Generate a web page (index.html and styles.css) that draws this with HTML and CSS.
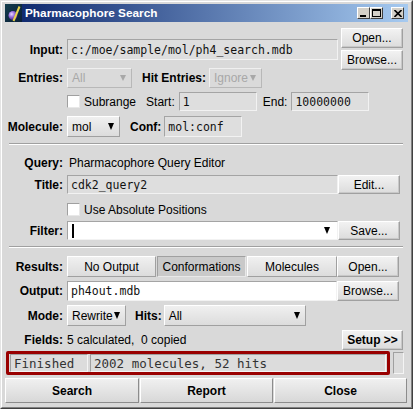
FILE: index.html
```html
<!DOCTYPE html>
<html>
<head>
<meta charset="utf-8">
<link rel="stylesheet" href="styles.css">
</head>
<body>
<div class="window">
  <div class="frame">
    <div class="titlebar">
      <svg class="app-icon" viewBox="0 0 17 18" width="17" height="18">
        <defs>
          <linearGradient id="ibg" x1="0" y1="0" x2="1" y2="1">
            <stop offset="0" stop-color="#123c4c"/>
            <stop offset="1" stop-color="#0b1f38"/>
          </linearGradient>
          <radialGradient id="sph" cx="0.35" cy="0.35" r="0.7">
            <stop offset="0" stop-color="#e8d8ff"/>
            <stop offset="0.45" stop-color="#9a70e0"/>
            <stop offset="1" stop-color="#3c1c78"/>
          </radialGradient>
        </defs>
        <rect width="17" height="18" fill="url(#ibg)"/>
        <circle cx="8" cy="11.5" r="4.5" fill="url(#sph)"/>
        <path d="M14.5 2.5 L8.5 17" stroke="#e8d44a" stroke-width="2" fill="none"/>
      </svg>
      <span class="title">Pharmacophore Search</span>
      <div class="controls">
        <span class="ctl"><svg width="9" height="8" viewBox="0 0 9 8"><rect x="1" y="6" width="6" height="2" fill="#000"/></svg></span>
        <span class="ctl"><svg width="9" height="8" viewBox="0 0 9 8"><rect x="0.5" y="0.5" width="8" height="7" fill="none" stroke="#000"/><rect x="0" y="0" width="9" height="2" fill="#000"/></svg></span>
        <span class="ctl ctl-close"><svg width="8" height="7" viewBox="0 0 8 7"><path d="M0.5 0 L7.5 7 M7.5 0 L0.5 7" stroke="#000" stroke-width="1.6"/></svg></span>
      </div>
    </div>

    <div class="body">
      <section class="sec-top">
        <div class="top-left">
          <div class="row r-input">
            <span class="lbl">Input:</span>
            <div class="fld mono w-main">c:/moe/sample/mol/ph4_search.mdb</div>
          </div>
          <div class="row r-entries">
            <span class="lbl">Entries:</span>
            <div class="dd dis w-entries"><span>All</span><span class="tri tri-sm"></span></div>
            <span class="lbl2 ml10">Hit Entries:</span>
            <div class="dd dis w-hit ml3"><span>Ignore</span><span class="tri tri-sm"></span></div>
          </div>
          <div class="row r-sub">
            <span class="lbl"></span>
            <span class="chk"></span>
            <span class="txt ml4">Subrange</span>
            <span class="txt ml10">Start:</span>
            <div class="fld mono w-num ml4">1</div>
            <span class="txt ml6">End:</span>
            <div class="fld mono w-num ml4">10000000</div>
          </div>
          <div class="row r-mol">
            <span class="lbl">Molecule:</span>
            <div class="dd w-mol"><span>mol</span><span class="tri"></span></div>
            <span class="lbl2 ml10">Conf:</span>
            <div class="fld mono w-conf ml3">mol:conf</div>
          </div>
        </div>
        <div class="top-right">
          <button class="btn">Open...</button>
          <button class="btn">Browse...</button>
        </div>
      </section>

      <div class="sep sep1"></div>

      <div class="row r-query">
        <span class="lbl">Query:</span>
        <span class="txt ml2">Pharmacophore Query Editor</span>
      </div>
      <div class="row r-title">
        <span class="lbl">Title:</span>
        <div class="fld mono w-main">cdk2_query2</div>
        <button class="btn ml3">Edit...</button>
      </div>
      <div class="row r-abs">
        <span class="lbl"></span>
        <span class="chk"></span>
        <span class="txt ml4">Use Absolute Positions</span>
      </div>
      <div class="row r-filter">
        <span class="lbl">Filter:</span>
        <div class="fld white w-main filter"><span class="caret"></span><span class="tri"></span></div>
        <button class="btn ml3">Save...</button>
      </div>

      <div class="sep sep2"></div>

      <div class="row r-results">
        <span class="lbl">Results:</span>
        <div class="seg">
          <button class="sbtn s1">No Output</button>
          <button class="sbtn s2 on">Conformations</button>
          <button class="sbtn s3">Molecules</button>
        </div>
        <button class="btn ml4">Open...</button>
      </div>
      <div class="row r-output">
        <span class="lbl">Output:</span>
        <div class="fld white mono w-out">ph4out.mdb</div>
        <button class="btn ml4">Browse...</button>
      </div>
      <div class="row r-mode">
        <span class="lbl">Mode:</span>
        <div class="dd w-mode"><span>Rewrite</span><span class="tri"></span></div>
        <span class="lbl2 ml9">Hits:</span>
        <div class="dd w-hits ml2"><span>All</span><span class="tri"></span></div>
      </div>
      <div class="row r-fields">
        <span class="lbl">Fields:</span>
        <span class="txt fields-txt">5 calculated,&nbsp; 0 copied</span>
        <button class="btn bold setup">Setup &gt;&gt;</button>
      </div>

      <div class="status">
        <div class="redbox">
          <div class="cell c-state">Finished</div>
          <div class="cell c-msg">2002 molecules, 52 hits</div>
        </div>
        <div class="cell c-small"></div>
      </div>

      <div class="actions">
        <button class="abtn a1">Search</button>
        <button class="abtn a2">Report</button>
        <button class="abtn a3">Close</button>
      </div>
    </div>
  </div>
</div>
</body>
</html>
```
FILE: styles.css
```css
html, body {
  margin: 0;
  padding: 0;
}
body {
  width: 413px;
  height: 409px;
  overflow: hidden;
  background: #d9d9d9;
  font-family: "Liberation Sans", Arial, sans-serif;
  font-size: 12px;
  color: #000;
}
.window {
  box-sizing: border-box;
  width: 413px;
  height: 409px;
  border: 1px solid;
  border-color: #e4e4e4 #404040 #404040 #e4e4e4;
}
.frame {
  box-sizing: border-box;
  height: 100%;
  border: 1px solid;
  border-color: #ffffff #808080 #808080 #ffffff;
  padding: 2px 3px 2px 3px;
  background: #d9d9d9;
}
.titlebar {
  height: 18px;
  display: flex;
  align-items: center;
  background: linear-gradient(to right, #0a246a, #a6caf0);
}
.app-icon {
  flex: none;
  display: block;
}
.title {
  color: #fff;
  font-weight: bold;
  font-size: 11.8px;
  margin-left: 3px;
  white-space: nowrap;
}
.controls {
  margin-left: auto;
  display: flex;
  align-items: center;
  padding-right: 4px;
}
.ctl {
  box-sizing: border-box;
  width: 13px;
  height: 12px;
  background: #d4d0c8;
  border: 1px solid;
  border-color: #ffffff #404040 #404040 #ffffff;
  display: flex;
  align-items: center;
  justify-content: center;
}
.ctl svg { display: block; }
.ctl-close { margin-left: 8px; }

.body {
  display: flex;
  flex-direction: column;
}

/* rows */
.row {
  display: flex;
  align-items: center;
  flex: none;
}
.row > * { flex: none; }
.lbl {
  width: 58px;
  margin-right: 4px;
  text-align: right;
  font-weight: bold;
  white-space: nowrap;
}
.lbl2 {
  font-weight: bold;
  white-space: nowrap;
}
.txt { white-space: nowrap; }
.ml2 { margin-left: 2px; }
.ml3 { margin-left: 3px; }
.ml4 { margin-left: 4px; }
.ml6 { margin-left: 6px; }
.ml9 { margin-left: 9px; }
.ml10 { margin-left: 10px; }

.sec-top {
  display: flex;
  align-items: flex-start;
  padding-top: 6px;
}
.top-left { width: 333px; flex: none; }
.top-right {
  margin-left: 3px;
  display: flex;
  flex-direction: column;
  gap: 2px;
}
.r-input { margin-top: 11px; height: 21px; }
.r-entries { margin-top: 8px; height: 20px; }
.r-sub { margin-top: 4px; height: 19px; }
.r-mol { margin-top: 5px; height: 21px; }

.r-query { margin-top: 9px; height: 18px; }
.r-title { margin-top: 3px; height: 19px; }
.r-abs { margin-top: 6px; height: 19px; }
.r-filter { margin-top: 2px; height: 19px; }

.r-results { margin-top: 8px; height: 21px; }
.r-output { margin-top: 4px; height: 20px; }
.r-mode { margin-top: 4px; height: 21px; }
.r-fields { margin-top: 4px; height: 19px; }

.sep {
  margin-left: 4px;
  width: 394px;
  height: 0;
  border-top: 1px solid #a0a0a0;
  border-bottom: 1px solid #ffffff;
}
.sep1 { margin-top: 6px; }
.sep2 { margin-top: 6px; }

/* fields */
.fld {
  box-sizing: border-box;
  height: 100%;
  display: flex;
  align-items: center;
  border: 1px solid;
  border-color: #a4a4a4 #f2f2f2 #f2f2f2 #a4a4a4;
  background: #dedede;
  padding-left: 3px;
  white-space: nowrap;
  overflow: hidden;
}
.mono {
  font-family: "DejaVu Sans Mono", "Liberation Mono", monospace;
  font-size: 11.5px;
  color: #111;
}
.white { background: #ffffff; }
.w-main { width: 271px; }
.w-out { width: 270px; }
.w-num { width: 78px; }
.w-conf { width: 78px; }
.filter { padding-left: 4px; }
.caret {
  width: 2px;
  height: 14px;
  background: #000;
}
.filter .tri { margin-left: auto; margin-right: 7px; }

/* buttons */
.btn {
  box-sizing: border-box;
  width: 62px;
  height: 20px;
  padding: 0;
  margin: 0;
  font-family: "Liberation Sans", Arial, sans-serif;
  font-size: 12px;
  color: #000;
  background: linear-gradient(#f2f2f2, #dcdcdc);
  border: 1px solid;
  border-color: #ffffff #a0a0a0 #a0a0a0 #ffffff;
  box-shadow: inset -1px -1px 0 #c8c8c8;
  white-space: nowrap;
}
.r-title .btn, .r-filter .btn { height: 19px; }
.r-results .btn { height: 21px; }
.bold { font-weight: bold; }
.setup { margin-left: auto; margin-right: 5px; width: 61px; }
.row > .setup { margin-left: auto; }
.r-fields { width: 403px; }

/* dropdowns */
.dd {
  box-sizing: border-box;
  height: 100%;
  display: flex;
  align-items: center;
  padding-left: 4px;
  border: 1px solid;
  border-color: #ffffff #a0a0a0 #a0a0a0 #ffffff;
  background: linear-gradient(#f0f0f0, #dcdcdc);
  white-space: nowrap;
}
.dd .tri { margin-left: auto; margin-right: 5px; }
.dd.dis {
  background: #dadada;
  color: #a8a8a8;
  border-color: #f0f0f0 #b8b8b8 #b8b8b8 #f0f0f0;
}
.dd.dis .tri { border-top-color: #a8a8a8; }
.w-entries { width: 65px; }
.w-hit { width: 53px; }
.w-mol { width: 53px; }
.w-mode { width: 59px; }
.w-hits { width: 142px; }

.tri {
  width: 0;
  height: 0;
  border-left: 3px solid transparent;
  border-right: 3px solid transparent;
  border-top: 7px solid #000;
  flex: none;
}
.tri-sm {
  border-left-width: 3px;
  border-right-width: 3px;
  border-top-width: 6px;
}

/* checkbox */
.chk {
  box-sizing: border-box;
  width: 13px;
  height: 13px;
  background: #fff;
  border: 1px solid;
  border-color: #a0a0a0 #e8e8e8 #e8e8e8 #a0a0a0;
}

/* segmented */
.seg {
  display: flex;
  gap: 1px;
  height: 100%;
}
.sbtn {
  box-sizing: border-box;
  height: 100%;
  padding: 0;
  margin: 0;
  font-family: "Liberation Sans", Arial, sans-serif;
  font-size: 12px;
  color: #000;
  background: linear-gradient(#f0f0f0, #dcdcdc);
  border: 1px solid;
  border-color: #ffffff #a0a0a0 #a0a0a0 #ffffff;
  white-space: nowrap;
}
.s1 { width: 89px; }
.s2 { width: 89px; }
.s3 { width: 90px; }
.sbtn.on {
  background: #c9c9c9;
  border-color: #a0a0a0 #e8e8e8 #e8e8e8 #a0a0a0;
}

/* status */
.status {
  display: flex;
  align-items: center;
  margin-top: 2px;
  height: 24px;
  flex: none;
}
.redbox {
  box-sizing: border-box;
  margin-left: 1px;
  width: 384px;
  height: 24px;
  border: 3px solid #990000;
  border-radius: 2px;
  display: flex;
  gap: 2px;
  padding: 0 1px;
}
.cell {
  box-sizing: border-box;
  height: 100%;
  display: flex;
  align-items: center;
  border: 1px solid;
  border-color: #a0a0a0 #f4f4f4 #f4f4f4 #a0a0a0;
  background: #dcdcdc;
  font-family: "DejaVu Sans Mono", "Liberation Mono", monospace;
  font-size: 12.5px;
  color: #333;
  white-space: nowrap;
  padding-left: 3px;
}
.c-state { width: 78px; flex: none; }
.c-msg { flex: 1; }
.c-small {
  margin-left: 3px;
  width: 11px;
  height: 22px;
  padding: 0;
}

/* bottom actions */
.actions {
  display: flex;
  gap: 1px;
  margin-top: 3px;
  height: 25px;
  flex: none;
}
.abtn {
  box-sizing: border-box;
  height: 25px;
  padding: 0;
  margin: 0;
  font-family: "Liberation Sans", Arial, sans-serif;
  font-size: 12px;
  font-weight: bold;
  color: #000;
  background: linear-gradient(#f0f0f0, #d8d8d8);
  border: 1px solid;
  border-color: #ffffff #8c8c8c #8c8c8c #ffffff;
}
.a1 { width: 134px; }
.a2 { width: 133px; }
.a3 { width: 133px; }
```
